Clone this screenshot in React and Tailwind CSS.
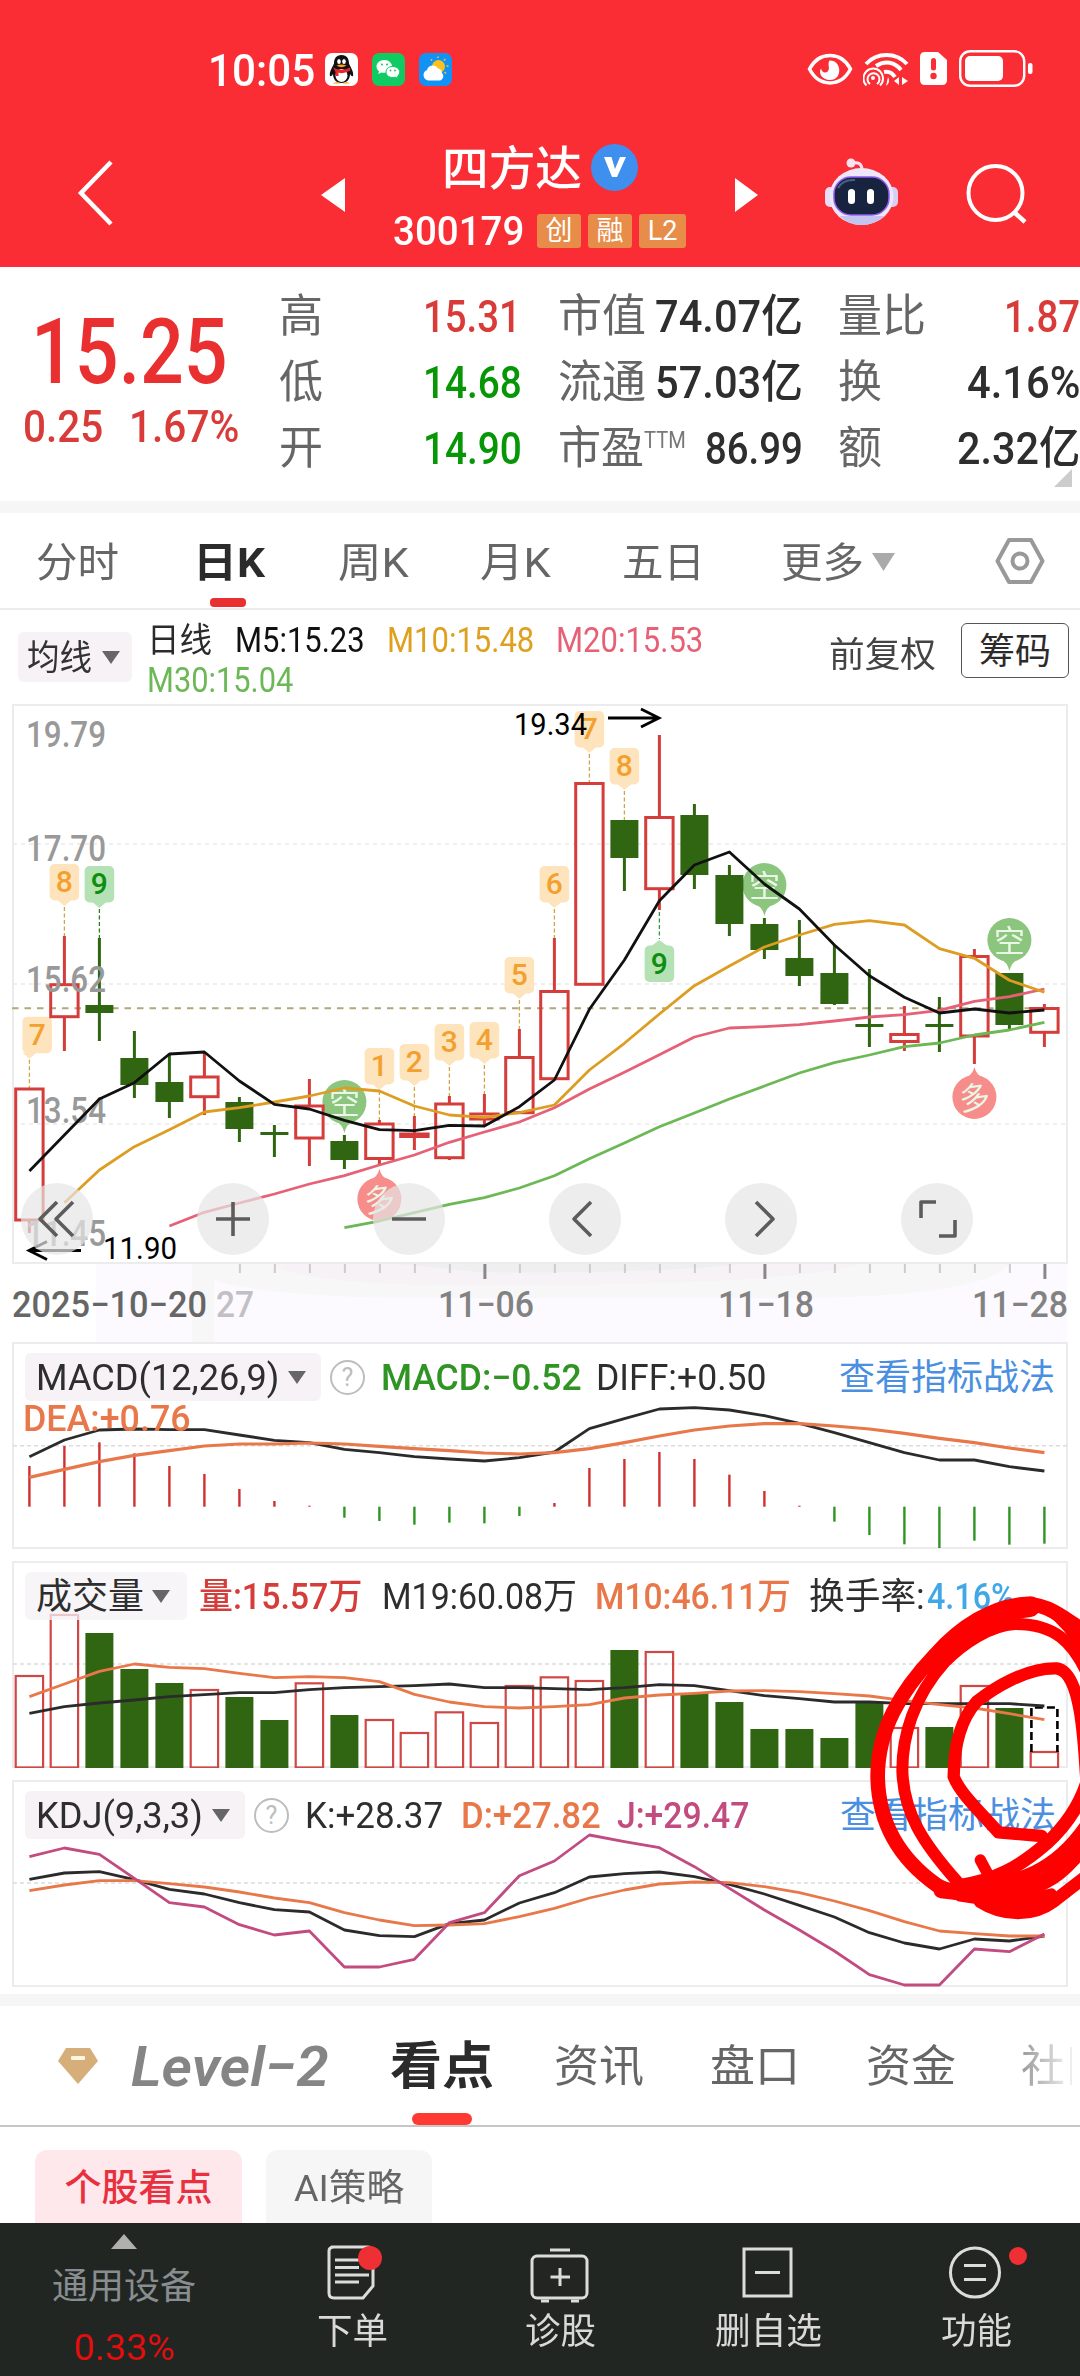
import React, { useLayoutEffect, useRef } from "react";

/* Text squeezed or stretched horizontally so that it fills its box */
function Fit({ className = "", children }) {
  const outer = useRef(null);
  const inner = useRef(null);
  useLayoutEffect(() => {
    const fit = () => {
      if (!outer.current || !inner.current) return;
      inner.current.style.transform = "none";
      const k = outer.current.clientWidth / inner.current.offsetWidth;
      inner.current.style.transform = `scaleX(${k})`;
    };
    fit();
    document.fonts?.ready.then(fit);
  }, []);
  return (
    <span ref={outer} className={`block shrink-0 pt-0.5 leading-none whitespace-nowrap ${className}`}>
      <span ref={inner} className="inline-block origin-left">{children}</span>
    </span>
  );
}

const X = (i) => 29.4 + 35 * i;
const pts = (vals, from = 0) => vals.map((v, k) => `${X(from + k)},${v}`).join(" ");
const scaled = (vals, base) => vals.map((v) => base + v / 3);

const RED = "#d43d3a";
const GREEN = "#306612";

/* [up?, high, bodyTop, bodyBottom, low] in chart coordinates */
const CANDLES = [
  [1, 1089, 1089, 1220, 1233], [1, 936, 984.7, 1016.7, 1051], [0, 938, 1005, 1013, 1041],
  [0, 1031, 1058, 1085, 1098], [0, 1055, 1082, 1102, 1118], [1, 1053, 1077, 1096.7, 1115],
  [0, 1097, 1102, 1129, 1142], [0, 1125, 1132, 1135, 1157], [1, 1079, 1106, 1138, 1166],
  [0, 1135, 1141, 1160, 1169], [1, 1120, 1124, 1158.5, 1166], [1, 1116, 1134, 1136.5, 1150],
  [1, 1096, 1104, 1157.7, 1160], [1, 1094, 1114, 1119, 1125], [1, 1029, 1057.5, 1112.7, 1113],
  [1, 938, 991.5, 1078.7, 1080], [1, 783.5, 783.5, 984.3, 984.3], [0, 820, 820, 858, 891],
  [1, 735, 817.5, 888.7, 910], [0, 804, 815, 875, 889], [0, 865, 875, 924, 936],
  [0, 918, 924, 950, 959], [0, 920, 958, 976, 986], [0, 945, 973, 1004, 1005],
  [0, 969, 1024, 1027, 1047], [1, 1006, 1034.5, 1041.5, 1051], [0, 997, 1024, 1027, 1052],
  [1, 949, 956.5, 1036, 1064], [0, 973, 973, 1025, 1029], [1, 1004, 1008.5, 1032.3, 1047],
];
const MA5 = [1171, 1135, 1099, 1082.7, 1054, 1052, 1081, 1104.3, 1109, 1120.3, 1129.7, 1130.7, 1125.3, 1126, 1106.7, 1080, 1009.3, 960, 900.7, 865, 852, 884, 909, 945, 975.7, 997.3, 1013, 1009, 1013, 1010];
const MA10 = [1202.7, 1170, 1146.7, 1129.7, 1112, 1107.7, 1102, 1096, 1088, 1091, 1106, 1115, 1117.3, 1112.7, 1105, 1070, 1043.3, 1014, 985.7, 966, 947, 935, 924.3, 920.7, 925, 948.7, 958.3, 980.3, 992.3];
const MA20 = [1226, 1212.3, 1203, 1194, 1184, 1175.7, 1165, 1155, 1142.3, 1132, 1122, 1107.7, 1089, 1072.3, 1054.7, 1037, 1028, 1026.7, 1024.7, 1021, 1017, 1014.7, 1010.3, 1001.3, 996.7, 989];
const MA30 = [1227.7, 1221, 1212.7, 1204.3, 1197.7, 1188, 1175.7, 1158.7, 1143, 1126.7, 1113, 1099, 1086, 1073, 1062.7, 1055, 1046.7, 1043, 1035, 1030, 1022.3];
/* [candle, label, top of the tag, end of its dashed lead] */
const TAGS = [
  [0, "7", 1016.7, 1088], [1, "8", 864, 936], [2, "9", 866, 938, true], [10, "1", 1048, 1120], [11, "2", 1044, 1116],
  [12, "3", 1024, 1096], [13, "4", 1022, 1094], [14, "5", 957, 1029], [15, "6", 866, 938], [16, "7", 711, 783], [17, "8", 748, 820],
];

function Label({ x, y, w, size = 36, fill = "#999", weight = 500, children }) {
  return (
    <text x={x} y={y} fontSize={size} fill={fill} fontWeight={weight} textLength={w} lengthAdjust="spacingAndGlyphs">
      {children}
    </text>
  );
}

function Tag({ i, n, top, end, green }) {
  const x = X(i);
  const bx = Math.max(x, 37.2);
  return (
    <g>
      <path d={`M${x} ${top + 43}V${end}`} stroke={green ? "#2c7d1c" : "#cfa54a"} strokeWidth="1.3" strokeDasharray="4 2.5" />
      <rect x={bx - 14.8} y={top} width="29.6" height="36.5" rx="5" fill={green ? "#b4e2b5" : "#fde4bd"} />
      <path d={`M${x - 7} ${top + 36}h14l-7 6z`} fill={green ? "#b4e2b5" : "#fde4bd"} />
      <text x={bx} y={top + 28} textAnchor="middle" fontSize="30" fontWeight="500" fill={green ? "#0d8f0d" : "#f3a02e"}>{n}</text>
    </g>
  );
}

function Pin({ i, cy, down }) {
  const x = X(i);
  const c = down ? "#86c277" : "#f78785";
  return (
    <g opacity="0.95">
      <circle cx={x} cy={cy} r="22" fill={c} />
      <path d={down ? `M${x - 9} ${cy + 19}Q${x - 2} ${cy + 22} ${x} ${cy + 31}Q${x + 2} ${cy + 22} ${x + 9} ${cy + 19}z` : `M${x - 9} ${cy - 19}Q${x - 2} ${cy - 22} ${x} ${cy - 30}Q${x + 2} ${cy - 22} ${x + 9} ${cy - 19}z`} fill={c} />
      <text x={x} y={cy + 12} textAnchor="middle" fontSize="31" fill="#e9f7e6" transform={down ? undefined : `rotate(-8 ${x} ${cy})`}>{down ? "空" : "多"}</text>
    </g>
  );
}

function MainChart() {
  return (
    <div className="relative h-[638px]">
      <svg className="block h-[638px] w-[1080px]" viewBox="0 704 1080 638" fill="none">
        <rect x="96" y="1264" width="971" height="79" fill="#fdfaff" />
        <path d="M192 1264H1010C985 1290 900 1297 800 1298H420C320 1298 240 1290 214 1280V1343H192z" fill="#f6f7f6" />
        <path d="M270 1264H860C800 1282 620 1286 440 1285C350 1284 290 1276 270 1264z" fill="#f6f2f5" />
        <path d="M400 1264H740C680 1272 560 1273 480 1272z" fill="#efefef" />
        <rect x="13" y="705" width="1054" height="558" stroke="#ececec" strokeWidth="2" />
        {[844, 984, 1124].map((y) => <path key={y} d={`M13 ${y}H1067`} stroke="#e9e9e9" strokeWidth="1.6" strokeDasharray="4 4" />)}
        <path d="M12 1008.3H1062" stroke="#b3a878" strokeWidth="2" strokeDasharray="6.5 6" />
        {TAGS.map(([i, n, top, end, g]) => <Tag key={i} i={i} n={n} top={top} end={end} green={g} />)}
        <path d={`M${X(18)} 912V939`} stroke="#2c9a3c" strokeWidth="1.3" strokeDasharray="4 2.5" />
        <rect x={X(18) - 14.8} y="945.5" width="29.6" height="36.5" rx="5" fill="#b4e2b5" />
        <path d={`M${X(18) - 8} 946h16l-8 -6z`} fill="#b4e2b5" />
        <text x={X(18)} y="973.5" textAnchor="middle" fontSize="30" fontWeight="500" fill="#0d8f0d">9</text>
        <Pin i={9} cy={1102} down />
        <Pin i={21} cy={885} down />
        <Pin i={28} cy={940} down />
        <Pin i={10} cy={1199} />
        <Pin i={27} cy={1097} />
        {CANDLES.map(([up, h, t, b, l], i) => {
          const x = X(i);
          return up ? (
            <g key={i} stroke={RED} strokeWidth="3">
              <path d={`M${x} ${h}V${t}M${x} ${b}V${l}`} />
              <rect x={x - 13.7} y={t} width="27.4" height={b - t} />
            </g>
          ) : (
            <g key={i} fill={GREEN}>
              <rect x={x - 1.5} y={h} width="3" height={l - h} />
              <rect x={x - 14} y={t} width="28" height={b - t} />
            </g>
          );
        })}
        <Label x={26} y={747} w={80}>19.79</Label>
        <Label x={26} y={861} w={80}>17.70</Label>
        <Label x={26} y={992} w={80}>15.62</Label>
        <Label x={26} y={1122.7} w={80}>13.54</Label>
        <Label x={26} y={1246} w={80}>11.45</Label>
        <g strokeWidth="2.8" strokeLinejoin="round">
          <polyline points={pts(MA30, 9)} stroke="#6cb855" />
          <polyline points={pts(MA20, 4)} stroke="#e66176" />
          <polyline points={pts(MA10, 1)} stroke="#dd9d22" />
          <polyline points={pts(MA5)} stroke="#111" />
        </g>
        <Label x={514} y={735} w={73} size={31} fill="#000" weight={400}>19.34</Label>
        <path d="M608 718H658M641 709L659 718L641 727" stroke="#000" strokeWidth="2.8" />
        <Label x={103} y={1259} w={74} size={31} fill="#000" weight={400}>11.90</Label>
        <path d="M81 1250.5H31M47 1241.500L29 1250.5L47 1259.500" stroke="#000" strokeWidth="2.8" />
        {Array.from({ length: 24 }, (_, k) => k + 6).map((i) => (
          <path key={i} d={`M${X(i) + 0.5} 1264v${[13, 21, 29].includes(i) ? 15 : 9}`} stroke={[13, 21, 29].includes(i) ? "#888" : "#ccc"} strokeWidth={[13, 21, 29].includes(i) ? 3 : 2} />
        ))}
        <Label x={12} y={1316.500} w={195} fill="#666">2025−10−20</Label>
        <Label x={216} y={1316.500} w={38} fill="#c2c0c4">27</Label>
        <Label x={438} y={1316.500} w={96} fill="#828282">11−06</Label>
        <Label x={718} y={1316.500} w={96} fill="#828282">11−18</Label>
        <Label x={972} y={1316.500} w={96} fill="#828282">11−28</Label>
      </svg>
      <div className="absolute left-[21px] top-[479px] flex gap-[104px]">
        {["M0 -17L-17 0L0 17M16 -17L-1 0L16 17", "M-17 0H17M0 -17V17", "M-17 0H17", "M6 -17L-11 0L6 17", "M-5 -17L12 0L-5 17", "M-16 -1V-17H-1M2 17H18V1"].map((d) => (
          <div key={d} className="flex size-[72px] items-center justify-center rounded-full bg-[#e6e6e6]/70">
            <svg className="size-[44px]" viewBox="-22 -22 44 44"><path d={d} fill="none" stroke="#5c5c5c" strokeWidth="3.6" strokeLinejoin="round" /></svg>
          </div>
        ))}
      </div>
    </div>
  );
}

function Caret({ className = "" }) {
  return (
    <svg className={`h-[13px] w-[18px] shrink-0 ${className}`} viewBox="0 0 18 13"><path d="M0 0H18L9 13z" fill="#666" /></svg>
  );
}

function Help({ className = "" }) {
  return (
    <span className={`flex size-[35px] shrink-0 items-center justify-center rounded-full border-[2.5px] border-[#bdbdbd] text-[25px] leading-none text-[#bdbdbd] ${className}`}>?</span>
  );
}

/* An indicator chart with its row of readings on top */
function Panel({ viewBox, chart, children, mid }) {
  return (
    <div className="relative mx-3 h-[207px] w-[1056px] border-2 border-[#ececec]">
      <svg className="absolute -left-3.5 -top-0.5 h-[207px] w-[1080px]" viewBox={viewBox} fill="none">
        <path d={`M13 ${mid}H1067`} stroke="#dcdcdc" strokeWidth="1.4" strokeDasharray="4 3" />
        {chart}
      </svg>
      <div className="relative mt-[9px] flex h-12 items-center pl-[11px] text-[36px]">{children}</div>
    </div>
  );
}

const HIST = [408, 348, 337, 370, 408, 432, 477, 513, 527, 563, 573, 584, 578, 580, 558, 519, 414, 387, 366, 387, 434, 483, 527, 575, 615, 643, 654, 632, 644, 641];
const DIFF = [380, 330, 300, 297, 299, 299, 315, 331, 338, 358, 368, 380, 387, 393, 383, 366, 296, 266, 237, 233, 240, 257, 280, 308, 338, 368, 390, 390, 410, 423];
const DEA = [442, 418, 395, 376, 362, 348, 342, 342, 339, 342, 349, 356, 362, 369, 372, 368, 356, 338, 318, 300, 288, 281, 281, 288, 297, 310, 325, 338, 354, 368];
const VOL = [378, 195, 249, 357, 399, 420, 441, 510, 400, 495, 510, 549, 487, 519, 408, 382, 393, 300, 306, 429, 456, 537, 537, 564, 459, 534, 531, 408, 474, 606];
const VOL_UP = [0, 1, 5, 8, 10, 11, 12, 13, 14, 15, 16, 18, 25, 27, 29];
const VM19 = [490, 470, 459, 450, 440, 434, 428, 428, 419, 413, 410, 407, 402, 413, 413, 416, 419, 413, 404, 407, 422, 437, 446, 456, 456, 461, 461, 461, 461, 468];
const VM10 = [440, 402, 364, 342, 352, 356, 370, 383, 380, 383, 395, 433, 456, 470, 474, 470, 464, 444, 435, 430, 423, 422, 425, 431, 438, 452, 464, 474, 491, 509];
const KK = [328, 309, 305, 329, 358, 372, 398, 419, 426, 480, 497, 500, 461, 450, 399, 368, 321, 311, 306, 320, 343, 372, 406, 441, 488, 519, 537, 507, 513, 498];
const DD = [362, 345, 332, 332, 341, 351, 366, 384, 398, 428, 450, 467, 465, 461, 440, 415, 384, 360, 342, 336, 338, 350, 368, 393, 422, 455, 483, 491, 498, 498];
const JJ = [260, 234, 253, 325, 398, 411, 464, 495, 483, 591, 591, 568, 458, 428, 317, 273, 195, 215, 233, 290, 355, 420, 480, 543, 614, 645, 645, 537, 545, 492];

const Line = ({ vals, base, c, w = 2.8 }) => <polyline points={pts(scaled(vals, base))} stroke={c} strokeWidth={w} strokeLinejoin="round" />;

function Indicators() {
  return (
    <div className="relative h-[651px]">
      <Panel
        viewBox="0 1342 1080 207"
        mid={1445.7}
        chart={
          <>
            {HIST.map((v, i) => <path key={i} d={`M${X(i)} 1506.700V${1330 + v / 3}`} stroke={v < 530 ? "#d02f2f" : "#2f9424"} strokeWidth="2.4" />)}
            <Line vals={DIFF} base={1330} c="#2b2b2b" />
            <Line vals={DEA} base={1330} c="#e8784a" w={3.2} />
          </>
        }
      >
        <div className="flex h-12 w-[296px] shrink-0 items-center rounded-md bg-[#f6f2f6] pl-[11px]">
          <Fit className="w-[243px] text-[#2e2e2e]">MACD(12,26,9)</Fit>
          <Caret className="ml-[9px]" />
        </div>
        <Help className="ml-[9px]" />
        <Fit className="ml-4 w-[201px] font-medium text-[#2f9424]">MACD:−0.52</Fit>
        <Fit className="ml-3.5 w-[171px] text-[#2e2e2e]">DIFF:+0.50</Fit>
        <Fit className="ml-[72px] w-[216px] text-[#4a8fe0]">查看指标战法</Fit>
        <Fit className="absolute left-[9px] top-[46px] w-[168px] font-medium text-[#e8784a]">DEA:+0.76</Fit>
      </Panel>
      <div className="h-3" />
      <Panel
        viewBox="0 1561 1080 207"
        mid={1664}
        chart={
          <>
            {VOL.map((v, i) => {
              const y = 1550 + v / 3;
              return VOL_UP.includes(i) ? (
                <rect key={i} x={X(i) - 13.7} y={y} width="27.4" height={1767.5 - y} stroke="#cf4846" strokeWidth="2.2" />
              ) : (
                <rect key={i} x={X(i) - 14} y={y} width="28" height={1768 - y} fill={GREEN} />
              );
            })}
            <path d={`M${X(29) - 13} 1752V1707.500H${X(29) + 13}V1752`} stroke="#000" strokeWidth="2.600" strokeDasharray="8 4" />
            <Line vals={VM19} base={1550} c="#2b2b2b" />
            <Line vals={VM10} base={1550} c="#e8784a" />
          </>
        }
      >
        <div className="flex h-12 w-[162px] shrink-0 items-center rounded-md bg-[#f6f2f6]/75 pl-[11px]">
          <Fit className="w-[108px] text-[#2e2e2e]">成交量</Fit>
          <Caret className="ml-2" />
        </div>
        <Fit className="ml-3 w-[163px] font-medium text-[#d43d3a]">量:15.57万</Fit>
        <Fit className="ml-5 w-[195px] text-[#2e2e2e]">M19:60.08万</Fit>
        <Fit className="ml-[18px] w-[196px] font-medium text-[#e8784a]">M10:46.11万</Fit>
        <Fit className="ml-[18px] w-[116px] text-[#2e2e2e]">换手率:</Fit>
        <Fit className="ml-0.5 w-[88px] font-medium text-[#41a8e8]">4.16%</Fit>
      </Panel>
      <div className="h-3" />
      <Panel
        viewBox="0 1780 1080 207"
        mid={1883}
        chart={
          <>
            <Line vals={KK} base={1770} c="#2b2b2b" />
            <Line vals={DD} base={1770} c="#e8784a" />
            <Line vals={JJ} base={1770} c="#c24b80" />
          </>
        }
      >
        <div className="flex h-12 w-[220px] shrink-0 items-center rounded-md bg-[#f6f2f6] pl-[11px]">
          <Fit className="w-[167px] text-[#2e2e2e]">KDJ(9,3,3)</Fit>
          <Caret className="ml-[9px]" />
        </div>
        <Help className="ml-[9px]" />
        <Fit className="ml-4 w-[138px] text-[#2e2e2e]">K:+28.37</Fit>
        <Fit className="ml-[18px] w-[140px] font-medium text-[#e8784a]">D:+27.82</Fit>
        <Fit className="ml-4 w-[132px] font-medium text-[#c24b80]">J:+29.47</Fit>
        <Fit className="ml-[91px] w-[216px] text-[#4a8fe0]">查看指标战法</Fit>
      </Panel>
      {/* Hand-drawn marker over the latest volume bars */}
      <svg className="absolute right-0 top-[238px] h-[340px] w-[220px]" viewBox="0 0 660 1020" fill="none" stroke="#ff0000" strokeLinecap="round" strokeLinejoin="round">
        <path d="M680 160C610 110 560 72 500 72C400 76 300 140 225 225C120 335 53 450 53 590C55 720 110 830 230 915C280 945 350 950 430 948" strokeWidth="44" />
        <path d="M510 80C400 90 300 165 215 255" strokeWidth="62" />
        <path d="M690 300C640 180 580 132 465 132C390 136 310 190 255 245C160 350 127 470 127 570C130 700 190 790 292 905" strokeWidth="36" />
        <path d="M560 85C610 120 650 170 680 230" strokeWidth="30" />
        <path d="M680 620C672 470 662 275 590 265C500 262 400 325 350 365C300 420 282 500 281 590C300 640 360 695 415 757L545 768" strokeWidth="37" />
        <path d="M290 918C400 905 480 860 560 790C620 735 660 670 680 610" strokeWidth="40" />
        <path d="M361 840L392 898C450 910 580 880 680 730" strokeWidth="34" />
        <path d="M245 930C340 945 470 935 550 905C620 870 660 810 690 760" strokeWidth="50" />
        <path d="M360 965C430 1010 520 1010 580 965L690 880" strokeWidth="38" />
        <path d="M300 950C400 970 480 960 575 940" strokeWidth="30" />
        <path d="M390 975L460 985L540 965" strokeWidth="40" />
      </svg>
    </div>
  );
}

function StatusBar() {
  return (
    <div className="flex h-[138px] items-start pl-[208px] pt-[50px]">
      <Fit className="mt-[-4px] w-[107px] text-[45px] font-medium">10:05</Fit>
      <svg className="ml-2.5 mt-[3px] size-[33px]" viewBox="0 0 33 33">
        <rect width="33" height="33" rx="7" fill="#fff" />
        <path d="M16.500 2C11 2 9 6 9 10.500C7 15 4 19 5 23C6 24 7.500 22 8 21C8 26 11 30 16.500 30S25 26 25 21C25.500 22 27 24 28 23C29 19 26 15 24 10.500C24 6 22 2 16.500 2z" fill="#111" />
        <ellipse cx="16.500" cy="22.500" rx="6" ry="6.500" fill="#fff" />
        <ellipse cx="14" cy="8.500" rx="1.800" ry="2.600" fill="#fff" /><ellipse cx="19" cy="8.500" rx="1.800" ry="2.600" fill="#fff" />
        <path d="M11.500 12.500Q16.500 10.500 21.500 12.500Q16.500 16 11.500 12.500z" fill="#f9a11b" />
        <path d="M8 14.500Q16.500 19 25 14.500L25.500 17.500Q16.500 21.500 13.500 19.500V23H10.500V19z" fill="#e5262b" />
        <path d="M8 30.500Q12 27.500 15.500 30.500zM17.500 30.500Q21 27.500 25 30.500z" fill="#f9a11b" />
      </svg>
      <svg className="ml-3.5 mt-[3px] size-[33px]" viewBox="0 0 33 33">
        <rect width="33" height="33" rx="7" fill="#10ca62" />
        <path d="M12.500 7C7.500 7 4.500 10 4.500 13.500C4.500 15.500 5.500 17 7 18.200L6.300 21L9.500 19.500C14 20.500 20 18.500 20 13.500C20 10 17 7 12.500 7z" fill="#fff" />
        <path d="M20.500 13.500C16.500 13.500 14 16 14 19C14 22.500 17.500 25.500 23.500 24.300L26 25.500L25.500 23.200C30 20 27.500 13.500 20.500 13.500z" fill="#fff" stroke="#10ca62" />
        <g fill="#10ca62"><circle cx="10" cy="11.500" r="1" /><circle cx="15" cy="11.500" r="1" /><circle cx="18.500" cy="17.500" r=".9" /><circle cx="23" cy="17.500" r=".9" /></g>
      </svg>
      <svg className="ml-3.5 mt-[3px] size-[33px]" viewBox="0 0 33 33">
        <rect width="33" height="33" rx="7" fill="#1392f6" />
        <circle cx="19.500" cy="13.500" r="6.500" fill="#fcc21b" />
        <path d="M19 5V3.500M25 7.500L26.500 6M27.500 13H29.500M13 7.500L12 6.200M25.500 19L27 20.500" stroke="#fcc21b" strokeWidth="1.500" />
        <path d="M9 27.500A5.500 5.500 0 0 1 8 17A6 6 0 0 1 19 15.500A5 5 0 0 1 23 20A4.500 4.500 0 0 1 21 27.500z" fill="#fff" />
      </svg>
      <svg className="ml-[355px] mt-[3px] h-[32px] w-[46px]" viewBox="0 0 46 32" fill="none">
        <path d="M2.500 16C12 -2 34 -2 43.500 16C34 34.500 12 34.500 2.500 16z" stroke="#fff" strokeWidth="3.500" />
        <path d="M22.500 7.500C35 7 36 27 23 27C15 27 11 20 14 15.500C15 20 19 20.500 21 18C23.500 14.500 20 12 22.500 7.500z" fill="#fff" />
      </svg>
      <svg className="ml-[10px] mt-px h-[36px] w-[46px]" viewBox="0 0 46 36" fill="none" stroke="#fff">
        <path d="M3 13C14 1 33 1 44 13" strokeWidth="4" /><path d="M13 15C22 9 32 11 38 19" strokeWidth="4" /><path d="M21 21C26 20 30 23 32 26" strokeWidth="4" />
        <circle cx="10" cy="27" r="2" fill="#fff" stroke="none" />
        <path d="M7 33A6 6 0 1 1 14 33" strokeWidth="2" /><path d="M3.500 34.500A9.800 9.800 0 1 1 17 34.500" strokeWidth="2" />
        <path d="M23 35Q28 31 25 26zM36 26V34L31 30zM39 26V34L45 30z" fill="#fff" stroke="none" />
      </svg>
      <svg className="ml-[11px] mt-[2px] h-[33px] w-[27px]" viewBox="0 0 27 33">
        <path d="M5 0H18L27 8V28Q27 33 22 33H5Q0 33 0 28V5Q0 0 5 0z" fill="#fff" />
        <rect x="11" y="6" width="5" height="12.500" rx="2.500" fill="#f92d33" /><circle cx="13.500" cy="24" r="3.200" fill="#f92d33" />
      </svg>
      <svg className="ml-[12px] h-[37px] w-[74px]" viewBox="0 0 74 37" fill="none">
        <rect x="1.200" y="1.200" width="64" height="34.600" rx="10" stroke="#fff" strokeWidth="2.400" />
        <rect x="6" y="6" width="38" height="25" rx="5" fill="#fff" /><rect x="69" y="13" width="4.500" height="11" rx="2" fill="#fff" />
      </svg>
    </div>
  );
}

function Header() {
  return (
    <div className="h-[267px] bg-[#f92d33] text-white">
      <StatusBar />
      <div className="flex h-[129px] items-start">
        <svg className="ml-[75px] mt-[20px] h-[70px] w-[40px]" viewBox="0 0 40 70"><path d="M36 4L6 35L36 66" fill="none" stroke="#fff" strokeWidth="4.500" /></svg>
        <svg className="ml-[206px] mt-[40px] h-[34px] w-[24px]" viewBox="0 0 24 34"><path d="M24 0V34L0 17z" fill="#fff" /></svg>
        <div className="ml-[48px] w-[294px]">
          <div className="flex h-[58px] items-center pl-[49px]">
            <Fit className="w-[140px] text-[47px] font-medium">四方达</Fit>
            <div className="ml-[9px] flex size-[47px] items-center justify-center rounded-full bg-[#3f8fee]">
              <svg className="size-[24px]" viewBox="0 0 24 24"><path d="M1 2H8.500L12 14L17 2H23L14 22H9z" fill="#fff" /></svg>
            </div>
          </div>
          <div className="mt-[18px] flex h-[34px] items-center">
            <Fit className="w-[131px] text-[40px] font-medium">300179</Fit>
            <div className="ml-[13px] flex gap-[7px]">
              {["创", "融", "L2"].map((t) => (
                <span key={t} className="flex h-[34px] w-[44px] items-center justify-center rounded-[3px] bg-[#e88d49] text-[27px] leading-none last:w-[47px]">{t}</span>
              ))}
            </div>
          </div>
        </div>
        <svg className="ml-[48px] mt-[40px] h-[34px] w-[23px]" viewBox="0 0 23 34"><path d="M0 0V34L23 17z" fill="#fff" /></svg>
        <svg className="ml-[67px] mt-[20px] h-[68px] w-[73px]" viewBox="0 0 73 68">
          <path d="M27 5Q37 3 37 12" fill="none" stroke="#f6e4f2" strokeWidth="3" /><circle cx="26" cy="5" r="4.500" fill="#f6e4f2" />
          <rect x="0" y="29" width="12" height="20" rx="5" fill="#e9dcf5" /><rect x="61" y="29" width="12" height="20" rx="5" fill="#d9cdf2" />
          <ellipse cx="36.500" cy="38.500" rx="32" ry="28.500" fill="#eee6fa" />
          <path d="M7 50Q20 67 36 67Q55 67 66 50L60 58L14 58z" fill="#c3c4f0" />
          <rect x="9" y="19" width="55" height="38" rx="17" fill="#18233f" stroke="#8d5cf0" strokeWidth="1.500" />
          <path d="M13 30Q18 21 30 22" stroke="#4b5f85" strokeWidth="2" fill="none" />
          <rect x="23" y="31" width="7" height="15" rx="3.500" fill="#fff" /><rect x="42" y="31" width="7" height="15" rx="3.500" fill="#fff" />
        </svg>
        <svg className="ml-[68px] mt-[26px] h-[62px] w-[64px]" viewBox="0 0 64 62" fill="none" stroke="#fff"><circle cx="29.500" cy="29" r="27" strokeWidth="4" /><path d="M48 48L59 58" strokeWidth="4.500" /></svg>
      </div>
    </div>
  );
}

function Stats() {
  return (
    <div className="relative flex h-[234px] items-start">
      <div className="w-[279px] shrink-0 text-[#ea2f30]">
        <Fit className="ml-[31px] mt-[39px] w-[197px] text-[90px] font-medium">15.25</Fit>
        <div className="mt-[4px] flex text-[45px] text-[#d93b39]">
          <Fit className="ml-[23px] w-[80px] font-medium">0.25</Fit>
          <Fit className="ml-[26px] w-[110px] font-medium">1.67%</Fit>
        </div>
      </div>
      <div className="flex flex-col pt-[15px] text-[45px] text-[#2e2e2e]">
        <div className="flex h-[66px] items-center">
          <Fit className="w-[44px] text-[#666]">高</Fit>
          <Fit className="ml-[100px] w-[98px] font-medium text-[#d93b39]">15.31</Fit>
          <Fit className="ml-[37px] w-[88px] text-[#666]">市值</Fit>
          <Fit className="ml-[9px] w-[148px] font-medium">74.07亿</Fit>
          <Fit className="ml-[35px] w-[88px] text-[#666]">量比</Fit>
          <Fit className="ml-[78px] w-[76px] font-medium text-[#d93b39]">1.87</Fit>
        </div>
        <div className="flex h-[66px] items-center">
          <Fit className="w-[44px] text-[#666]">低</Fit>
          <Fit className="ml-[100px] w-[99px] font-medium text-[#069606]">14.68</Fit>
          <Fit className="ml-[36px] w-[88px] text-[#666]">流通</Fit>
          <Fit className="ml-[9px] w-[148px] font-medium">57.03亿</Fit>
          <Fit className="ml-[35px] w-[44px] text-[#666]">换</Fit>
          <Fit className="ml-[85px] w-[113px] font-medium">4.16%</Fit>
        </div>
        <div className="flex h-[66px] items-center">
          <Fit className="w-[44px] text-[#666]">开</Fit>
          <Fit className="ml-[100px] w-[99px] font-medium text-[#069606]">14.90</Fit>
          <Fit className="ml-[36px] w-[86px] text-[#666]">市盈</Fit>
          <Fit className="mb-[16px] w-[42px] text-[23px] text-[#777]">TTM</Fit>
          <Fit className="ml-[19px] w-[98px] font-medium">86.99</Fit>
          <Fit className="ml-[35px] w-[44px] text-[#666]">额</Fit>
          <Fit className="ml-[75px] w-[123px] font-medium">2.32亿</Fit>
        </div>
      </div>
      <svg className="absolute bottom-[14px] right-[8px] h-[18px] w-[18px]" viewBox="0 0 18 18"><path d="M18 0V18H0z" fill="#ccc" /></svg>
    </div>
  );
}

function PeriodTabs() {
  return (
    <div className="flex h-[97px] items-center border-b-2 border-[#ececec] pt-[3px] text-[41px] text-[#666]">
      <Fit className="ml-[36px] w-[83px]">分时</Fit>
      <div className="relative ml-[74px]">
        <Fit className="w-[72px] font-bold text-[#2b2b2b]">日K</Fit>
        <div className="absolute left-[17px] top-[57px] h-[9px] w-[36px] rounded bg-[#ea2f30]" />
      </div>
      <Fit className="ml-[73px] w-[71px]">周K</Fit>
      <Fit className="ml-[71px] w-[71px]">月K</Fit>
      <Fit className="ml-[71px] w-[83px]">五日</Fit>
      <Fit className="ml-[76px] w-[83px]">更多</Fit>
      <svg className="ml-[8px] h-[18px] w-[23px]" viewBox="0 0 23 18"><path d="M0 0H23L11.500 18z" fill="#aaa" /></svg>
      <svg className="mb-[2px] ml-[100px] h-[48px] w-[50px]" viewBox="0 0 50 48" fill="none" stroke="#999" strokeWidth="4" strokeLinejoin="round"><path d="M14 3H36L47.500 24L36 45H14L2.500 24z" /><circle cx="25" cy="24" r="7.500" /></svg>
    </div>
  );
}

function MaRow() {
  return (
    <div className="flex h-[94px] items-start text-[35px]">
      <div className="ml-[18px] mt-[22px] flex h-[50px] w-[114px] shrink-0 items-center rounded-md bg-[#f6f2f6] pl-[9px]">
        <Fit className="w-[65px] text-[#333]">均线</Fit>
        <Caret className="ml-[10px]" />
      </div>
      <div className="ml-[15px] w-[682px] shrink-0 pt-[9px]">
        <div className="flex h-[40px] items-center">
          <Fit className="w-[65px] text-[34px] text-[#2b2b2b]">日线</Fit>
          <Fit className="ml-[23px] w-[130px] text-[#111]">M5:15.23</Fit>
          <Fit className="ml-[22px] w-[147px] text-[#dfa01f]">M10:15.48</Fit>
          <Fit className="ml-[22px] w-[147px] text-[#e66176]">M20:15.53</Fit>
        </div>
        <Fit className="mt-[2px] w-[146px] text-[#6cb855]">M30:15.04</Fit>
      </div>
      <Fit className="mt-[26px] w-[107px] text-[#444]">前复权</Fit>
      <div className="ml-[25px] mt-[13px] flex h-[55px] w-[108px] items-center justify-center rounded-md border-[1.5px] border-[#555]">
        <Fit className="w-[72px] text-[36px] text-[#2b2b2b]">筹码</Fit>
      </div>
    </div>
  );
}

function ContentTabs() {
  return (
    <div className="flex h-[121px] items-center border-b-2 border-[#c6c6c6] text-[44px] text-[#666]">
      <svg className="ml-[57px] h-[38px] w-[42px]" viewBox="0 0 42 38"><path d="M9 1H33L41 14L21 37L1 14z" fill="#d6ae79" /><rect x="14" y="9" width="14" height="4" rx="1" fill="#fff4dc" /></svg>
      <Fit className="ml-[32px] w-[198px] text-[56px] font-semibold italic text-[#858585]">Level−2</Fit>
      <div className="relative ml-[61px]">
        <Fit className="w-[104px] text-[51px] font-bold text-[#2b2b2b]">看点</Fit>
        <div className="absolute left-[22px] top-[74px] h-[12px] w-[60px] rounded-md bg-[#ff3a33]" />
      </div>
      <Fit className="ml-[60px] w-[90px]">资讯</Fit>
      <Fit className="ml-[66px] w-[90px]">盘口</Fit>
      <Fit className="ml-[66px] w-[90px]">资金</Fit>
      <Fit className="ml-[65px] w-[44px]">
        <span className="bg-gradient-to-r from-[#999] to-[#e8e8e8] bg-clip-text text-transparent">社</span>
      </Fit>
      <div className="ml-[5px] h-[38px] w-[2px] bg-[#eee]" />
    </div>
  );
}

function BottomBar() {
  const items = [
    ["下单", "w-[71px]", <><path d="M5 3H42Q47 3 47 8V42L37 54H8Q3 54 3 49V7Q3 3 8 3" /><path d="M9 16H33M9 23.500H33M9 31H43M9 38H33" /></>, <circle key="d" cx="44" cy="14" r="12" fill="#ee2f33" stroke="none" />],
    ["诊股", "w-[71px]", <><rect x="-2" y="12" width="55" height="42" rx="5" /><path d="M16 6H36M26 24V42M16.500 33H36M7 57H15M37 57H45" /></>],
    ["删自选", "w-[107px]", <><rect x="2" y="5" width="47" height="47" /><path d="M13 28.500H38" /></>],
    ["功能", "w-[71px]", <><circle cx="25" cy="28.500" r="24.500" /><path d="M14 21.500H36M14 35.500H36" /></>, <circle key="d" cx="68" cy="12" r="9" fill="#ee2f33" stroke="none" />],
  ];
  return (
    <div className="flex h-[153px] bg-[#222623]">
      <div className="flex w-[248px] flex-col items-center pt-[11px]">
        <svg className="h-[15px] w-[26px]" viewBox="0 0 26 15"><path d="M13 0L26 15H0z" fill="#b0b0b0" /></svg>
        <Fit className="mt-[18px] w-[144px] text-[36px] text-[#888d90]">通用设备</Fit>
        <Fit className="mt-[22px] w-[101px] text-[37px] text-[#e30f0f]">0.33%</Fit>
      </div>
      {items.map(([label, w, icon, dot]) => (
        <div key={label} className="flex w-[208px] flex-col items-center pt-[21px]">
          <svg className="h-[60px] w-[52px] overflow-visible" viewBox="0 0 52 60" fill="none" stroke="#dcdcdc" strokeWidth="3">{icon}{dot}</svg>
          <Fit className={`mt-[8px] text-[36px] text-[#d9d9d9] ${w}`}>{label}</Fit>
        </div>
      ))}
    </div>
  );
}

export default function App() {
  return (
    <div className="h-[2376px] w-[1080px] overflow-hidden bg-white font-[Roboto,'Noto_Sans_CJK_SC',sans-serif]">
      <Header />
      <Stats />
      <div className="h-3 bg-[#f6f6f6]" />
      <PeriodTabs />
      <MaRow />
      <MainChart />
      <Indicators />
      <div className="mt-px h-3 bg-[#f6f6f6]" />
      <ContentTabs />
      <div className="flex h-[96px] items-start gap-6 overflow-hidden pl-[35px] pt-[23px] text-[37px]">
        <div className="flex h-[80px] w-[207px] justify-center rounded-t-xl bg-[#ffe8ec] pt-[18px]"><Fit className="w-[148px] font-medium text-[#e8303f]">个股看点</Fit></div>
        <div className="flex h-[80px] w-[166px] justify-center rounded-t-xl bg-[#f6f6f6] pt-[18px]"><Fit className="w-[110px] text-[#666]">AI策略</Fit></div>
      </div>
      <BottomBar />
    </div>
  );
}
